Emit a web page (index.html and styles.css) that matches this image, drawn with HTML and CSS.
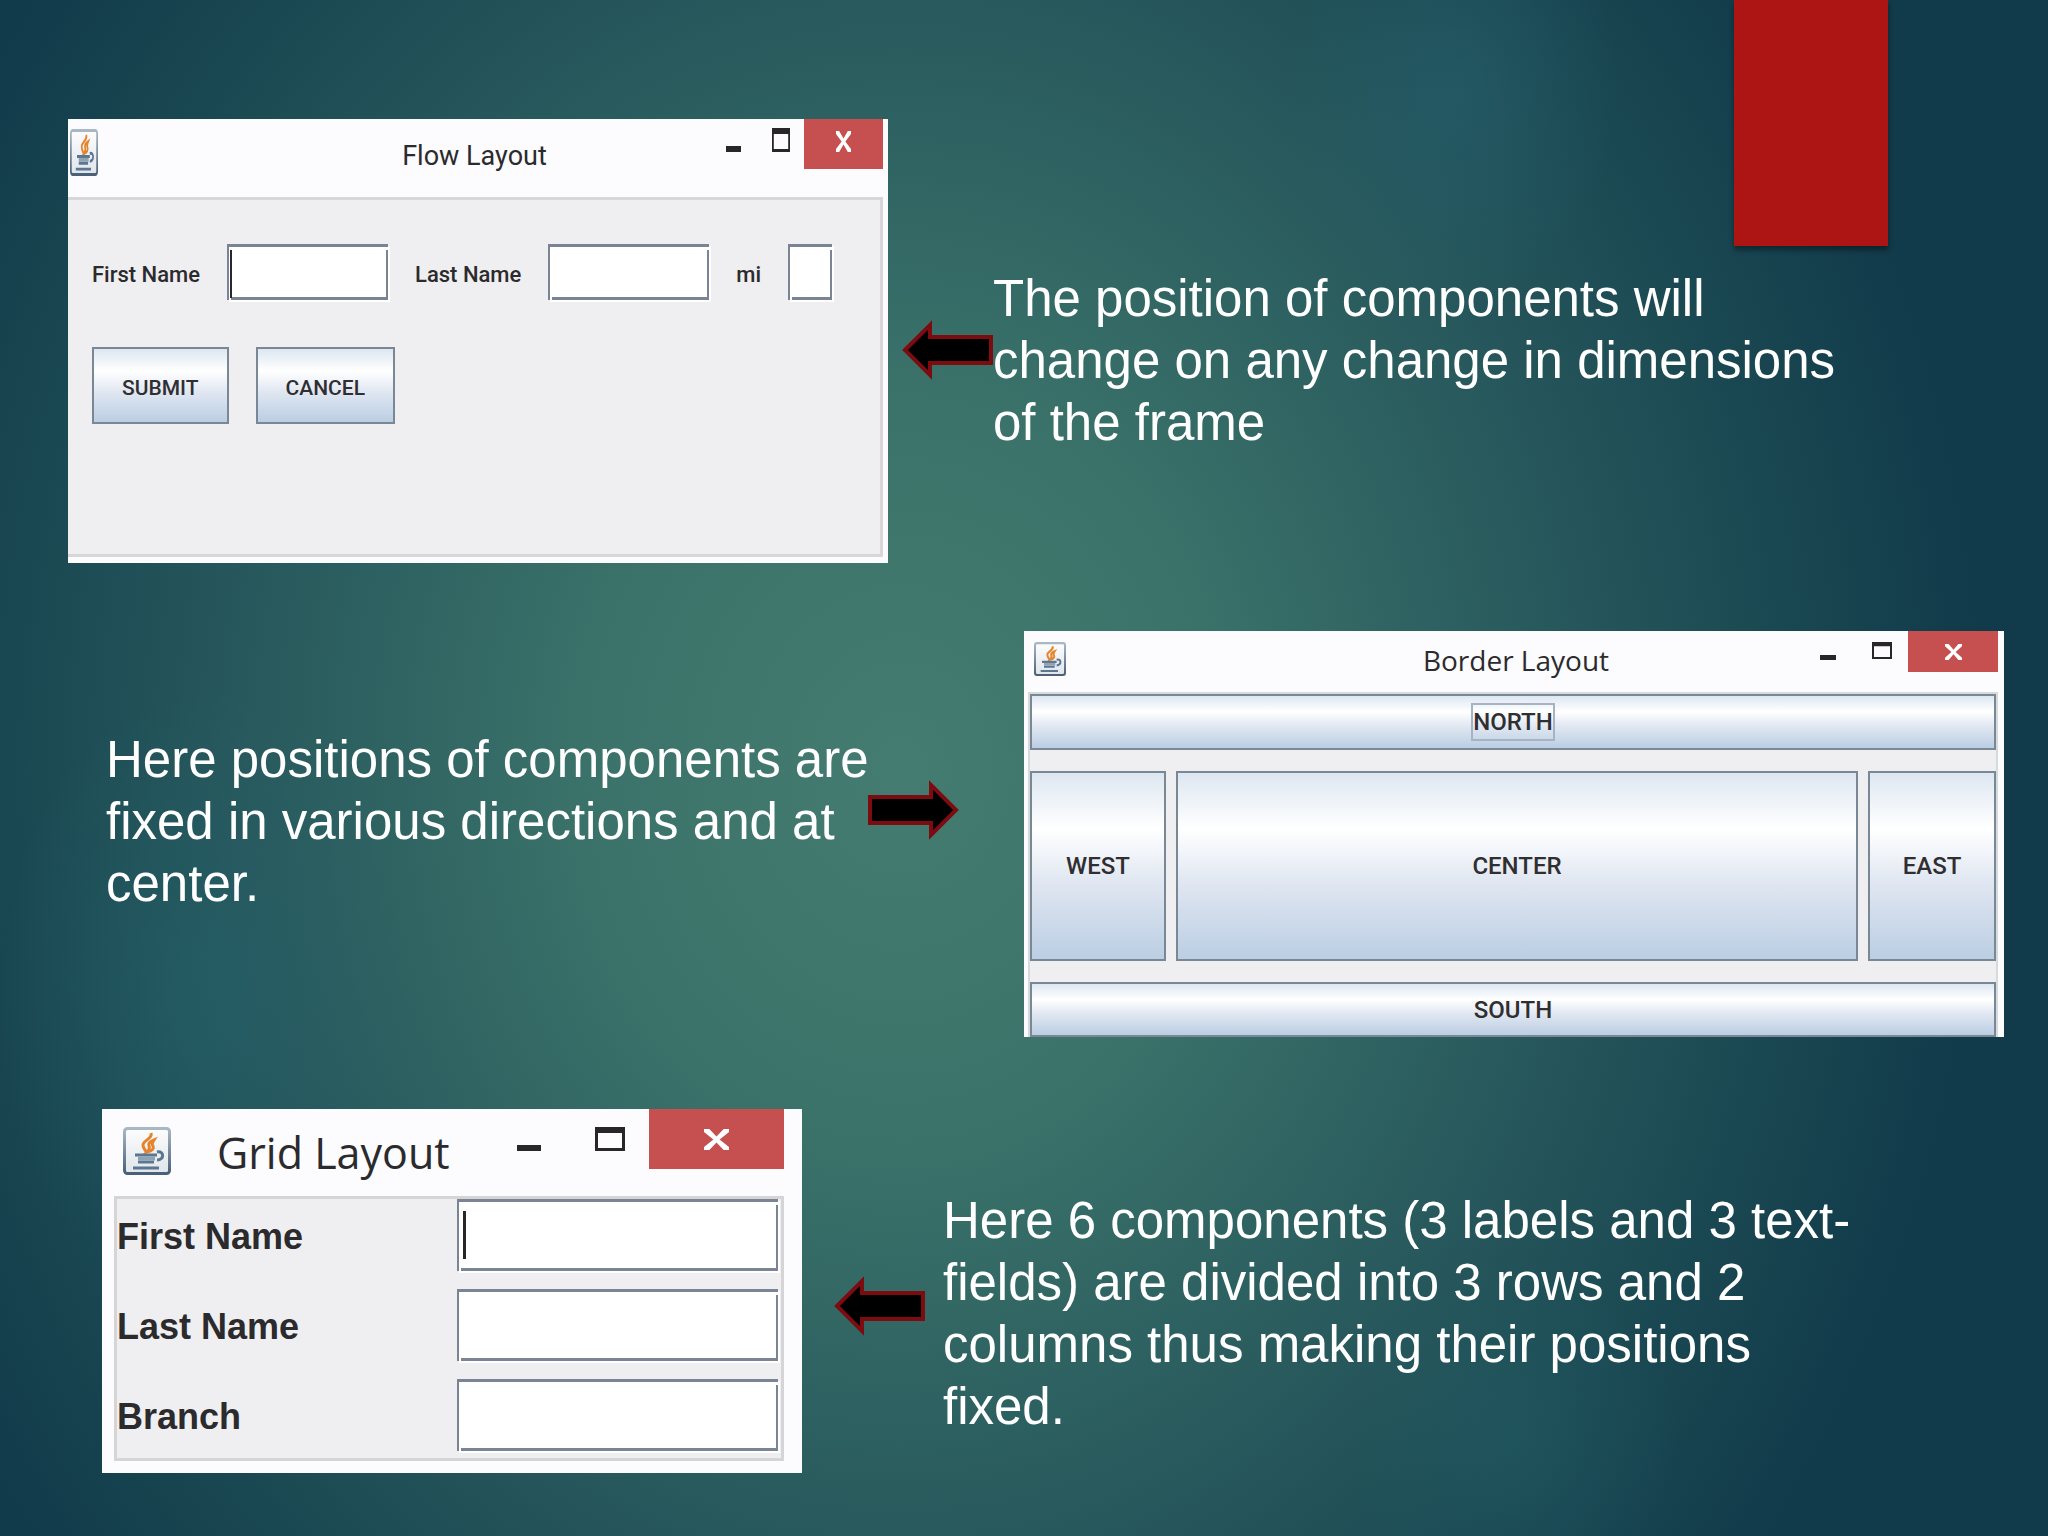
FILE: index.html
```
<!DOCTYPE html>
<html lang="en">

<head>
    <meta charset="utf-8">
    <title>Layouts</title>
    <link rel="stylesheet" href="styles.css">
</head>

<body>
    <!-- shared icons -->
    <svg class="sprite" aria-hidden="true">
        <defs>
            <linearGradient id="tile" x1="0" y1="0" x2="0" y2="1">
                <stop offset="0" stop-color="#fdfdfd" />
                <stop offset="1" stop-color="#dfe5ea" />
            </linearGradient>
            <linearGradient id="edge" x1="0" y1="0" x2="0" y2="1">
                <stop offset="0" stop-color="#a9b8c6" />
                <stop offset="1" stop-color="#4a6078" />
            </linearGradient>
        </defs>
        <symbol id="java" viewBox="0 0 48 48" preserveAspectRatio="none">
            <rect x="1.5" y="1.5" width="45" height="45" rx="3" fill="url(#tile)" stroke="url(#edge)" stroke-width="3" />
            <path d="M28 6c2 6-8 7-8 12 0 3 2 5 4 8M31 13c-5 2-6 4-5 6 1 2 0 4-2 6 6-1 7-4 6-6-1-1-1-3 1-6z" fill="none" stroke="#e5842c" stroke-width="3" />
            <path d="M12 28h22M15 35h16M10 41h26" fill="none" stroke="#5b7690" stroke-width="3" />
            <path d="M15 31.500h17" fill="none" stroke="#8fa3b4" stroke-width="4" />
            <path d="M34 25c7-2 8 8 0 8" fill="none" stroke="#5b7690" stroke-width="3" />
        </symbol>
        <symbol id="max" viewBox="0 0 30 24" preserveAspectRatio="none">
            <path d="M0 0h30v24H0zM3 6v15h24V6z" fill="#28262a" fill-rule="evenodd" />
        </symbol>
        <symbol id="close" viewBox="0 0 8 7" preserveAspectRatio="none">
            <path d="M0 0h1.700L4 2.500 6.300 0H8v1L5 3.500 8 6v1H6.300L4 4.500 1.700 7H0V6l3-2.500L0 1z" fill="#fff" />
        </symbol>
        <symbol id="arrow" viewBox="0 0 91 60">
            <path d="M3 30L28 5V17H89V43H28V55Z" fill="#000" stroke="#7c0c10" stroke-width="4" />
        </symbol>
    </svg>

    <div class="ribbon"></div>

    <main class="slide">
        <section class="row row-flow">
            <div class="window flow">
                <div class="titlebar">
                    <svg class="java"><use href="#java" /></svg>
                    <span class="title">Flow Layout</span>
                    <div class="controls">
                        <button class="min" aria-label="Minimize"></button>
                        <button class="max" aria-label="Maximize"><svg><use href="#max" /></svg></button>
                        <button class="close" aria-label="Close"><svg><use href="#close" /></svg></button>
                    </div>
                </div>
                <form class="content">
                    <label for="flow-first">First Name</label>
                    <input id="flow-first" class="field focused" type="text">
                    <label for="flow-last">Last Name</label>
                    <input id="flow-last" class="field" type="text">
                    <label for="flow-mi">mi</label>
                    <input id="flow-mi" class="field short" type="text">
                    <div class="buttons">
                        <button type="button" class="btn">SUBMIT</button>
                        <button type="button" class="btn">CANCEL</button>
                    </div>
                </form>
            </div>
            <svg class="arrow"><use href="#arrow" /></svg>
            <p class="note">The position of components will change on any change in dimensions of the frame</p>
        </section>

        <section class="row row-border">
            <p class="note">Here positions of components are fixed in various directions and at center.</p>
            <svg class="arrow right"><use href="#arrow" /></svg>
            <div class="window border">
                <div class="titlebar">
                    <svg class="java"><use href="#java" /></svg>
                    <span class="title">Border Layout</span>
                    <div class="controls">
                        <button class="min" aria-label="Minimize"></button>
                        <button class="max" aria-label="Maximize"><svg><use href="#max" /></svg></button>
                        <button class="close" aria-label="Close"><svg><use href="#close" /></svg></button>
                    </div>
                </div>
                <div class="content">
                    <button class="btn north"><span>NORTH</span></button>
                    <button class="btn west">WEST</button>
                    <button class="btn center">CENTER</button>
                    <button class="btn east">EAST</button>
                    <button class="btn south">SOUTH</button>
                </div>
            </div>
        </section>

        <section class="row row-grid">
            <div class="window grid">
                <div class="titlebar">
                    <svg class="java"><use href="#java" /></svg>
                    <span class="title">Grid Layout</span>
                    <div class="controls">
                        <button class="min" aria-label="Minimize"></button>
                        <button class="max" aria-label="Maximize"><svg><use href="#max" /></svg></button>
                        <button class="close" aria-label="Close"><svg><use href="#close" /></svg></button>
                    </div>
                </div>
                <form class="content">
                    <label for="grid-first">First Name</label>
                    <input id="grid-first" class="field focused" type="text">
                    <label for="grid-last">Last Name</label>
                    <input id="grid-last" class="field" type="text">
                    <label for="grid-branch">Branch</label>
                    <input id="grid-branch" class="field" type="text">
                </form>
            </div>
            <svg class="arrow"><use href="#arrow" /></svg>
            <p class="note">Here 6 components (3 labels and 3 text-fields) are divided into 3 rows and 2 columns thus making their positions fixed.</p>
        </section>
    </main>
</body>

</html>
```

FILE: styles.css
```
* {
    box-sizing: border-box;
}

body {
    margin: 0;
    min-height: 100vh;
    font-family: "Liberation Sans", Arial, sans-serif;
    color: #fff;
    background:
        radial-gradient(ellipse 8% 14% at 71% 6%, rgba(40, 100, 115, 0.45), transparent),
        radial-gradient(ellipse 10% 20% at 10% 65%, rgba(36, 98, 108, 0.5), transparent),
        radial-gradient(ellipse 8% 12% at 74% 94%, rgba(36, 98, 108, 0.35), transparent),
        radial-gradient(ellipse 53% 84% at 44% 50%, #447c71 0%, #3b736a 28%, #28595d 60%, #1a4852 82%, #113a4a 100%);
    background-color: #113a4a;
}

.sprite {
    position: absolute;
    width: 0;
    height: 0;
}

.ribbon {
    position: absolute;
    top: 0;
    right: 160px;
    width: 154px;
    height: 246px;
    background-color: #ad1515;
    box-shadow: 0 4px 5px rgba(0, 0, 0, 0.4);
}

.slide {
    display: flex;
    flex-direction: column;
    gap: 68px;
    padding-top: 119px;
}

.row {
    display: grid;
    align-items: start;
}

.row-flow {
    grid-template-columns: 820fr 91px 890fr;
    column-gap: 14px;
    padding: 0 151px 0 68px;
}

.row-border {
    grid-template-columns: 768fr 150px 980fr;
    padding: 0 44px 0 106px;
}

.row-grid {
    grid-template-columns: 700fr 91px 960fr;
    column-gap: 32px;
    margin-top: 4px;
    padding: 0 131px 0 102px;
}

/* text and arrows */

.note {
    margin: 0;
    font-size: 51px;
    line-height: 62px;
}

.row-flow .note {
    margin: 149px 0 0 -14px;
    padding-right: 48px;
}

.row-border .note {
    margin-top: 98px;
}

.row-grid .note {
    margin: 81px 0 0 -14px;
    padding-right: 48px;
}

.arrow {
    width: 91px;
    height: 60px;
}

.row-flow .arrow {
    margin-top: 201px;
}

.row-border .arrow {
    margin: 149px 0 0 -6px;
}

.row-grid .arrow {
    margin-top: 167px;
}

.right {
    transform: scaleX(-1);
}

/* windows */

.window {
    color: #2b2a2d;
    background-color: #fcfbfd;
}

.titlebar {
    display: grid;
    grid-template-columns: 1fr auto 1fr;
    align-items: center;
    font-family: "Open Sans", "Noto Sans", sans-serif;
}

.controls {
    display: flex;
    align-self: start;
    justify-content: flex-end;
}

.controls button {
    display: flex;
    justify-content: center;
    border: 0;
    padding: 0;
    background: none;
}

.controls .min {
    background-color: #28262a;
}

.controls svg {
    width: 100%;
    height: 100%;
}

.controls .close {
    align-items: center;
    background-color: #c64f4f;
}

.content {
    background-color: #efeef0;
}

.content label {
    padding-top: 4px;
}

.btn {
    border: 2px solid #7a8795;
    padding: 0;
    font-family: Roboto, "Liberation Sans", sans-serif;
    font-weight: 500;
    color: #2f2e31;
    background: linear-gradient(#dde7f1, #fff 30%, #dfe6f1 60%, #bbcee3);
}

/* sunken field, the top right and bottom left corners stay open */
.field {
    border: 0;
    padding: 0 9px;
    min-width: 0;
    font-size: 32px;
    background:
        linear-gradient(#7b8494, #7b8494) 0 0 / 100% 3px no-repeat,
        linear-gradient(#7b8494, #7b8494) 0 0 / 2px 100% no-repeat,
        linear-gradient(#7b8494, #7b8494) 100% 6px / 2px 100% no-repeat,
        linear-gradient(#7b8494, #7b8494) 4px 100% / 100% 3px no-repeat,
        #fff;
    box-shadow: 2px 2px 0 #fff;
}

/* text cursor */
.focused {
    background:
        linear-gradient(#28262a, #28262a) var(--caret) no-repeat,
        linear-gradient(#7b8494, #7b8494) 0 0 / 100% 3px no-repeat,
        linear-gradient(#7b8494, #7b8494) 0 0 / 2px 100% no-repeat,
        linear-gradient(#7b8494, #7b8494) 100% 6px / 2px 100% no-repeat,
        linear-gradient(#7b8494, #7b8494) 4px 100% / 100% 3px no-repeat,
        #fff;
}

/* flow layout */

.flow {
    padding-bottom: 6px;
}

.flow .titlebar {
    height: 78px;
    padding: 0 9px 0 2px;
}

.flow .java {
    width: 28px;
    height: 47px;
    margin-bottom: 12px;
}

.flow .title {
    padding-bottom: 4px;
    font-family: Roboto, "Open Sans", sans-serif;
    font-size: 27px;
}

.flow .controls {
    margin-right: -4px;
}

.flow .min {
    width: 15px;
    height: 6px;
    margin: 27px 31px 0 0;
}

.flow .max {
    width: 18px;
    height: 24px;
    margin: 9px 14px 0 0;
}

.flow .close {
    width: 79px;
    height: 50px;
}

.flow .close svg {
    width: 15px;
    height: 21px;
    margin-bottom: 5px;
}

.flow .content {
    display: flex;
    flex-wrap: wrap;
    align-items: center;
    align-content: flex-start;
    gap: 47px 27px;
    min-height: 360px;
    margin-right: 5px;
    padding: 44px 20px 44px 24px;
    border: 3px solid #d8d6d9;
    border-left: 0;
    font-family: Roboto, "Liberation Sans", sans-serif;
    font-size: 22px;
    font-weight: 500;
}

.flow .field {
    width: 161px;
    height: 56px;
}

.flow .focused {
    --caret: 3px 6px / 2px 48px;
}

.flow .short {
    width: 44px;
}

.buttons {
    display: flex;
    gap: 27px;
    width: 100%;
}

.flow .btn {
    height: 77px;
    padding: 4px 28px 0;
    font-size: 21px;
}

/* border layout */

.border .titlebar {
    height: 61px;
    padding: 0 6px 0 10px;
}

.border .java {
    width: 32px;
    height: 34px;
    margin-bottom: 5px;
}

.border .title {
    padding-bottom: 3px;
    font-size: 28px;
}

.border .min {
    width: 16px;
    height: 5px;
    margin: 24px 36px 0 0;
}

.border .max {
    width: 20px;
    height: 17px;
    margin: 11px 16px 0 0;
}

.border .close {
    width: 90px;
    height: 41px;
}

.border .close svg {
    width: 17px;
    height: 16px;
}

.border .content {
    display: grid;
    grid-template-areas:
        "north north north"
        "west center east"
        "south south south";
    grid-template-columns: 136px 1fr 128px;
    grid-template-rows: 56px 190px 55px;
    gap: 21px 10px;
    margin: 0 6px 0 4px;
    border: 2px solid #d5dadc;
    border-bottom: 0;
}

.border .btn {
    font-size: 24px;
}

.north {
    grid-area: north;
}

.north span {
    display: inline-block;
    border: 2px solid #a5b3c4;
    line-height: 34px;
}

.west {
    grid-area: west;
}

.center {
    grid-area: center;
}

.east {
    grid-area: east;
}

.south {
    grid-area: south;
}

/* grid layout */

.grid {
    padding-bottom: 12px;
}

.grid .titlebar {
    grid-template-columns: auto 1fr auto;
    column-gap: 46px;
    height: 87px;
    padding: 0 18px 0 21px;
}

.grid .java {
    width: 48px;
    height: 48px;
    margin-bottom: 3px;
}

.grid .title {
    font-size: 43px;
    line-height: 60px;
}

.grid .min {
    width: 24px;
    height: 6px;
    margin: 36px 54px 0 0;
}

.grid .max {
    width: 30px;
    height: 24px;
    margin: 18px 24px 0 0;
}

.grid .close {
    width: 135px;
    height: 60px;
}

.grid .close svg {
    width: 25px;
    height: 21px;
}

.grid .content {
    display: grid;
    grid-template-columns: 1fr 321px;
    grid-auto-rows: 72px;
    align-items: center;
    row-gap: 18px;
    margin: 0 18px 0 12px;
    padding: 0 3px 7px 0;
    border: 3px solid #d5d4d6;
    font-size: 36px;
    font-weight: bold;
}

.grid .field {
    height: 72px;
}

.grid .focused {
    --caret: 6px 12px / 3px 48px;
}
```
